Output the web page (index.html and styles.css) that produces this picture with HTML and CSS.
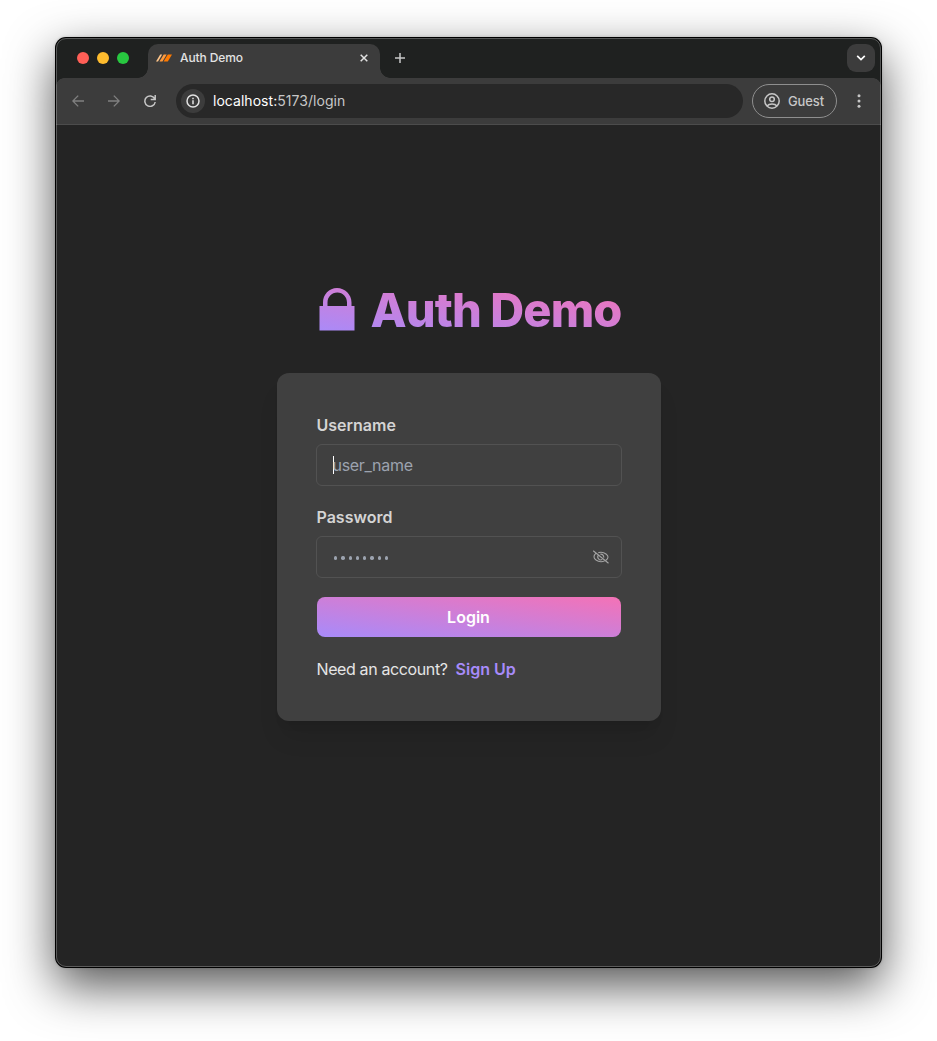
FILE: index.html
```html
<!DOCTYPE html>
<html lang="en">
<head>
<meta charset="utf-8">
<title>Auth Demo</title>
<link rel="stylesheet" href="styles.css">
</head>
<body>
<div class="window">
  <header class="tabstrip">
    <div class="lights"><i class="light red"></i><i class="light yellow"></i><i class="light green"></i></div>
    <div class="tab">
      <svg class="favicon" width="16" height="8" viewBox="0 0 16 8"><path d="M0 7.5 4.2.5h2L2 7.5z" fill="#ffc58a"/><path d="M3.500 7.500 7.700.500h3L6.500 7.500z" fill="#ff9a3c"/><path d="M7.600 7.500 11.800.500H16l-4.200 7z" fill="#ff7a00"/></svg>
      <span class="tab-title">Auth Demo</span>
      <svg class="close" width="8" height="8" viewBox="0 0 8 8"><path d="M.7.7l6.6 6.6M7.3.7.7 7.3" stroke="#e3e3e3" stroke-width="1.5"/></svg>
    </div>
    <svg class="plus" width="10" height="10" viewBox="0 0 10 10"><path d="M5 0v10M0 5h10" stroke="#c7c7c7" stroke-width="1.5"/></svg>
    <div class="tab-search"><svg width="10" height="6" viewBox="0 0 10 6"><path d="M1.2.8 5 4.6 8.8.8" fill="none" stroke="#fff" stroke-width="1.7"/></svg></div>
  </header>
  <nav class="toolbar">
    <svg class="nav-icon" width="12" height="12" viewBox="0 0 12 12"><path d="M12 6H1M6.2.6.8 6l5.4 5.4" fill="none" stroke="#808080" stroke-width="1.3"/></svg>
    <svg class="nav-icon" width="12" height="12" viewBox="0 0 12 12"><path d="M0 6h11M5.8.6 11.2 6l-5.4 5.4" fill="none" stroke="#808080" stroke-width="1.3"/></svg>
    <svg class="nav-icon" width="12" height="12" viewBox="0 0 12 12"><path d="M10.6 3.6A5.2 5.2 0 1 0 11.2 7M11.2 0v4.5H6.7" fill="none" stroke="#c7c7c7" stroke-width="1.5"/></svg>
    <div class="address">
      <span class="site-info"><svg width="14" height="14" viewBox="0 0 14 14"><circle cx="7" cy="7" r="6" fill="none" stroke="#e3e3e3" stroke-width="1.5"/><path d="M7 6.2v4M7 3.7v1.5" stroke="#e3e3e3" stroke-width="1.5"/></svg></span>
      <span class="url"><span class="host">localhost:</span>5173/login</span>
    </div>
    <div class="guest">
      <svg width="16" height="16" viewBox="0 0 16 16" fill="none" stroke="#c7c7c7" stroke-width="1.5"><circle cx="8" cy="8" r="7.2"/><circle cx="8" cy="6.2" r="2.3"/><path d="M3 13c1.2-1.5 3-2.1 5-2.1s3.8.6 5 2.1"/></svg>
      <span class="guest-label">Guest</span>
    </div>
    <svg class="menu" width="4" height="14" viewBox="0 0 4 14" fill="#c7c7c7"><circle cx="2" cy="1.8" r="1.5"/><circle cx="2" cy="7" r="1.5"/><circle cx="2" cy="12.2" r="1.5"/></svg>
  </nav>
  <main class="page">
    <h1 class="brand">
      <svg class="lock" width="42" height="48" viewBox="0 0 42 48">
        <defs><linearGradient id="brandFill" gradientUnits="userSpaceOnUse" x1="145" y1="71" x2="160" y2="-23"><stop offset="0" stop-color="#a78bfa"/><stop offset="1" stop-color="#f472b6"/></linearGradient></defs>
        <path fill="url(#brandFill)" fill-rule="evenodd" d="M3.5 20H7V16.500C7 8.500 13 2 21 2S35.500 8.500 35.500 16.500V20H38.500V44.500H3.500zM11.500 20H31V16.500C31 11 27 6.500 21.300 6.500S11.500 11 11.500 16.500z"/>
      </svg>
      <span class="brand-text">Auth Demo</span>
    </h1>
    <form class="card">
      <label class="label">Username</label>
      <div class="field"><i class="caret"></i><span class="placeholder">user_name</span></div>
      <label class="label">Password</label>
      <div class="field">
        <span class="dots"><i></i><i></i><i></i><i></i><i></i><i></i><i></i><i></i></span>
        <svg class="eye" width="18" height="14" viewBox="0 0 18 14" fill="none" stroke="#a3a3a3" stroke-width="1.1"><path d="M1.2.8 16.500 13.200M4 3.100C2.700 4.200 2 5.600 2 7c0 1.800 3 4.700 7 4.700 1.300 0 2.500-.3 3.500-.7M6.300 2.600C7.200 2.400 8 2.300 9 2.300c4 0 7 2.900 7 4.700 0 1.200-1 2.500-2.100 3.300M6.400 5.200A2.900 2.900 0 0 0 10.300 9.400M8.300 4.200A2.900 2.900 0 0 1 11.700 7.600"/></svg>
      </div>
      <button type="button" class="login">Login</button>
      <p class="signup"><span class="need">Need an account?</span><a class="link">Sign Up</a></p>
    </form>
  </main>
</div>
</body>
</html>
```
FILE: styles.css
```css
* { box-sizing: border-box; }
body {
  margin: 0;
  height: 1041px;
  padding: 37px 55px 0;
  background: #fff;
  font-family: Inter, "Liberation Sans", sans-serif;
  overflow: hidden;
}
svg { display: block; flex: none; }
.window {
  position: relative;
  width: 827px;
  height: 931px;
  padding: 1px;
  border-radius: 11px;
  background: #000;
  display: flex;
  flex-direction: column;
  box-shadow: 0 18px 48px rgba(0,0,0,.67), 0 0 3px rgba(0,0,0,.18);
}
.window::after {
  content: "";
  position: absolute;
  inset: 1px;
  border: 1px solid rgba(255,255,255,.25);
  border-radius: 10px;
}
.tabstrip {
  height: 40px;
  flex: none;
  display: flex;
  align-items: center;
  background: #1f2120;
  border-radius: 10px 10px 0 0;
}
.lights { display: flex; gap: 8px; padding-left: 21px; width: 92px; }
.light { width: 12px; height: 12px; border-radius: 50%; }
.red { background: #ff5f57; }
.yellow { background: #febc2e; }
.green { background: #28c840; }
.tab {
  position: relative;
  align-self: flex-end;
  width: 232px;
  height: 34px;
  padding: 0 12px 6px 8px;
  display: flex;
  align-items: center;
  background: #3c3c3c;
  border-radius: 10px 10px 0 0;
}
.tab::before, .tab::after {
  content: "";
  position: absolute;
  bottom: 0;
  width: 10px;
  height: 10px;
}
.tab::before { left: -10px; background: radial-gradient(circle at 0 0, transparent 9.5px, #3c3c3c 10px); }
.tab::after { right: -10px; background: radial-gradient(circle at 100% 0, transparent 9.5px, #3c3c3c 10px); }
.tab-title { margin-left: 8px; padding-bottom: 2px; font-size: 12px; font-weight: 500; color: #e3e3e3; letter-spacing: -.1px; }
.close { margin-left: auto; }
.plus { margin-left: 15px; }
.tab-search {
  width: 28px;
  height: 28px;
  margin-left: auto;
  margin-right: 6px;
  display: flex;
  align-items: center;
  justify-content: center;
  border-radius: 9px;
  background: #3c3c3c;
}
.toolbar {
  position: relative;
  height: 47px;
  flex: none;
  padding-left: 16px;
  display: flex;
  align-items: center;
  background: #3c3c3c;
  border-bottom: 1px solid #4c4c4c;
  color: #c7c7c7;
}
.toolbar::before {
  content: "";
  position: absolute;
  inset: 0 0 auto;
  height: 8px;
  background:
    radial-gradient(circle at 100% 100%, transparent 7.5px, #1f2120 8px) left / 8px 8px no-repeat,
    radial-gradient(circle at 0 100%, transparent 7.5px, #1f2120 8px) right / 8px 8px no-repeat;
}
.nav-icon { margin-right: 24px; }
.address {
  width: 567px;
  height: 34px;
  margin-left: -4px;
  margin-right: 9px;
  padding-left: 5px;
  display: flex;
  align-items: center;
  border-radius: 17px;
  background: #282828;
}
.site-info {
  width: 24px;
  height: 24px;
  border-radius: 50%;
  background: #3c3c3c;
  display: flex;
  align-items: center;
  justify-content: center;
}
.url { margin-left: 8px; padding-bottom: 1px; font-size: 14px; color: #c7c7c7; letter-spacing: .04px; }
.host { color: #fff; }
.guest {
  width: 85px;
  height: 34px;
  padding-left: 11px;
  display: flex;
  align-items: center;
  border: 1px solid #8f8f8f;
  border-radius: 17px;
}
.guest-label { margin-left: 8px; font-size: 13px; font-weight: 500; letter-spacing: -.1px; }
.menu { margin-left: 20px; }
.page {
  flex: 1;
  display: flex;
  flex-direction: column;
  align-items: center;
  padding-top: 161px;
  background: #242424;
  border-radius: 0 0 10px 10px;
}
.brand {
  width: 306px;
  height: 48px;
  margin: 0 0 39px;
  display: flex;
  font-size: 47px;
  line-height: 48px;
  font-weight: 800;
}
.brand-text {
  width: 264px;
  padding-left: 13px;
  letter-spacing: -.9px;
  white-space: nowrap;
  color: transparent;
  background: linear-gradient(to top right, #a78bfa, #f472b6) right / 306px 48px;
  -webkit-background-clip: text;
  background-clip: text;
}
.card {
  width: 384px;
  height: 348px;
  padding: 40px 39px;
  display: flex;
  flex-direction: column;
  background: #404040;
  border-radius: 12px;
  box-shadow: 0 20px 25px -5px rgba(0,0,0,.1), 0 8px 10px -6px rgba(0,0,0,.1);
}
.label { padding-left: 1px; height: 24px; margin-bottom: 7px; font-size: 16px; line-height: 24px; font-weight: 600; color: #d4d4d4; }
.field {
  height: 42px;
  margin-bottom: 19px;
  padding: 0 11px 0 16px;
  display: flex;
  align-items: center;
  border: 1px solid #525252;
  border-radius: 6px;
}
.caret { width: 1px; height: 18px; margin-right: -1px; background: #fff; }
.placeholder { font-size: 16px; letter-spacing: -.3px; color: #9ca3af; }
.dots { display: flex; gap: 4px; padding: 2px 0 0 1.5px; }
.dots i { width: 3.3px; height: 3.3px; border-radius: 50%; background: #9ca3af; }
.eye { margin-left: auto; }
.login {
  height: 40px;
  margin: 0 1px 20px;
  padding: 0;
  border: 0;
  border-radius: 8px;
  background: linear-gradient(to top right, #a78bfa, #f472b6);
  color: #fff;
  font: 600 16px/40px Inter, sans-serif;
}
.signup { margin: 0; padding-left: 1px; display: flex; gap: 8px; font-size: 16px; line-height: 24px; color: #e5e5e5; white-space: nowrap; }
.need { letter-spacing: -.38px; }
.link { font-weight: 600; color: #a78bfa; }
```
